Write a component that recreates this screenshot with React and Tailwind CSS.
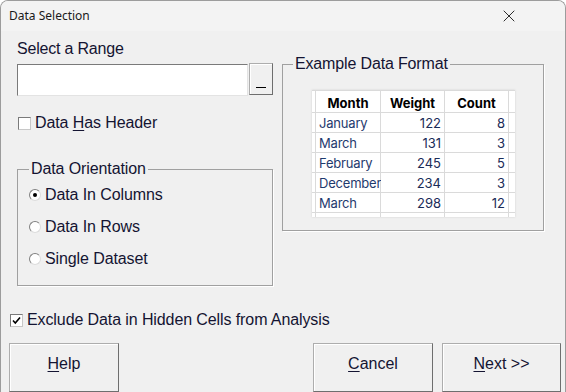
import React from "react";
import { X } from "lucide-react";

const rows = [
    { month: "January", weight: 122, count: 8 },
    { month: "March", weight: 131, count: 3 },
    { month: "February", weight: 245, count: 5 },
    { month: "December", weight: 234, count: 3 },
    { month: "March", weight: 298, count: 12 },
];

// 클래식 윈도우 버튼
const WinButton = ({ className, children }) => (
    <button
        className={
            "flex items-center justify-center bg-[#f0f0f0] border border-[#adadad] border-b-[#6e6e6e] border-r-[#6e6e6e] shadow-[inset_1px_1px_0_#ffffff] text-[16px] text-[#141432] " +
            className
        }
    >
        {children}
    </button>
);

const CheckBox = ({ checked }) => (
    <span className="w-[13px] h-[13px] shrink-0 bg-white border border-[#7a7a7a] border-b-[#c8c8c8] border-r-[#c8c8c8] flex items-center justify-center">
        {checked && (
            <svg width="9" height="9" viewBox="0 0 9 9">
                <path d="M1 4.5 L3.3 7 L8 1.5" fill="none" stroke="#000" strokeWidth="1.6" />
            </svg>
        )}
    </span>
);

const Radio = ({ checked }) => (
    <span className="w-[12px] h-[12px] shrink-0 rounded-full bg-white border border-[#808080] border-b-[#dcdcdc] border-r-[#dcdcdc] flex items-center justify-center">
        {checked && <span className="w-[4px] h-[4px] rounded-full bg-black" />}
    </span>
);

const App = () => {
    return (
        <div className="w-[566px] h-[392px] overflow-hidden bg-[#f0f0f0] border border-b-0 border-[#9c9c9c] rounded-t-[8px] flex flex-col font-['Liberation_Sans',Arial,sans-serif] text-[#141432]">
            {/* 타이틀 바 */}
            <div className="h-[30px] shrink-0 bg-[#f3f3f3] flex items-center justify-between pl-[8px] pr-[46px]">
                <span className="font-['Noto_Sans',sans-serif] text-[12px] text-[#1a1a1a] leading-none">Data Selection</span>
                <X size={20} strokeWidth={1.1} className="text-[#1a1a1a]" />
            </div>

            {/* 본문 */}
            <div className="flex">
                {/* 왼쪽 컬럼 */}
                <div className="ml-[16px] w-[256px] flex flex-col">
                    <div className="mt-[9px] text-[16px] leading-[18px] tracking-[-0.2px]">Select a Range</div>
                    <div className="mt-[5px] flex items-start">
                        <div className="mt-px w-[231px] h-[32px] bg-white border border-[#7a7a7a] border-b-[#e3e3e3] border-r-[#e3e3e3]" />
                        <WinButton className="ml-[1px] w-[24px] h-[32px] items-end pb-[3px] leading-none">
                            <span className="block w-[10px] h-[1px] bg-black mb-[3px]" />
                        </WinButton>
                    </div>
                    <div className="mt-[18px] h-[18px] flex items-center gap-[4px] pl-px">
                        <CheckBox />
                        <span className="text-[16px] leading-[18px] tracking-[-0.1px]">
                            Data <u className="underline-offset-2">H</u>as Header
                        </span>
                    </div>

                    <fieldset className="mt-[28px] h-[126px] w-[256px] border border-[#a0a0a0] shadow-[1px_1px_0_#ffffff]">
                        <legend className="ml-[11px] px-[2px] text-[16px] leading-[18px] tracking-[-0.1px]">Data Orientation</legend>
                        <div className="flex flex-col pt-px pl-[11px]">
                            {["Data In Columns", "Data In Rows", "Single Dataset"].map((label, i) => (
                                <div key={label} className="h-[32px] flex items-center gap-[4px]">
                                    <Radio checked={i === 0} />
                                    <span className="text-[16px] leading-[18px] tracking-[-0.1px]">{label}</span>
                                </div>
                            ))}
                        </div>
                    </fieldset>
                </div>

                {/* 오른쪽 컬럼 */}
                <div className="ml-[9px] flex flex-col">
                    <fieldset className="mt-[24px] w-[262px] h-[176px] border border-[#a0a0a0] shadow-[1px_1px_0_#ffffff]">
                        <legend className="ml-[10px] px-[2px] text-[16px] leading-[18px] tracking-[-0.15px]">Example Data Format</legend>
                        <div className="mt-[17px] ml-[29px] w-[203px] h-[127px] bg-[#dadada] pt-px grid grid-cols-[3px_64px_63px_63px_6px] grid-rows-[21px_19px_19px_19px_19px_19px_4px] gap-px font-['Inter',sans-serif] text-[13px] leading-none shadow-[0_0_2px_#d0d0d0]">
                            <div className="bg-white" />
                            <div className="bg-white flex items-center justify-center pt-[3px] font-bold text-black">Month</div>
                            <div className="bg-white flex items-center justify-center pt-[3px] font-bold text-black">Weight</div>
                            <div className="bg-white flex items-center justify-center pt-[3px] font-bold text-black">Count</div>
                            <div className="bg-white" />
                            {rows.map((r, i) => (
                                <React.Fragment key={i}>
                                    <div className="bg-white" />
                                    <div className="bg-white flex items-center pt-[2px] pl-[3px] text-[#1f3a6e] whitespace-nowrap tracking-[-0.2px]">{r.month}</div>
                                    <div className="bg-white flex items-center justify-end pt-[2px] pr-[3px] text-[#1a2c58]">{r.weight}</div>
                                    <div className="bg-white flex items-center justify-end pt-[2px] pr-[3px] text-[#1a2c58]">{r.count}</div>
                                    <div className="bg-white" />
                                </React.Fragment>
                            ))}
                            <div className="bg-white" />
                            <div className="bg-white" />
                            <div className="bg-white" />
                            <div className="bg-white" />
                            <div className="bg-white" />
                        </div>
                    </fieldset>
                </div>
            </div>

            {/* 숨김 셀 제외 체크박스 */}
            <div className="mt-[25px] h-[18px] flex items-center gap-[4px] pl-[9px]">
                <CheckBox checked />
                <span className="text-[16px] leading-[18px] tracking-[-0.1px]">Exclude Data in Hidden Cells from Analysis</span>
            </div>

            {/* 하단 버튼 */}
            <div className="mt-[14px] flex pl-[8px] pr-[4px]">
                <WinButton className="w-[110px] h-[49px] pb-[8px]">
                    <span><u className="underline-offset-2">H</u>elp</span>
                </WinButton>
                <WinButton className="ml-auto w-[120px] h-[49px] pb-[8px]">
                    <span><u className="underline-offset-2">C</u>ancel</span>
                </WinButton>
                <WinButton className="ml-[9px] w-[119px] h-[49px] pb-[8px]">
                    <span><u className="underline-offset-2">N</u>ext &gt;&gt;</span>
                </WinButton>
            </div>
        </div>
    );
};

export default App;
